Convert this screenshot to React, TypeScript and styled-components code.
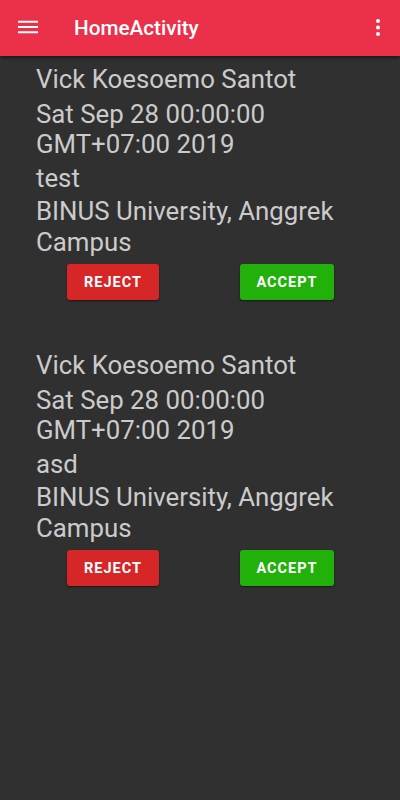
import styled, { createGlobalStyle } from 'styled-components'

const GlobalStyle = createGlobalStyle`
  html, body {
    margin: 0;
    padding: 0;
    background: #303030;
  }
  body {
    font-family: Roboto, "Noto Sans", sans-serif;
  }
`

const Screen = styled.div`
  width: 400px;
  min-height: 800px;
  background: #303030;
`

const Toolbar = styled.header`
  height: 56px;
  background: #ea3149;
  display: flex;
  align-items: center;
  padding: 0 10px 0 16px;
  box-shadow: 0 2px 3px rgba(0, 0, 0, 0.45);
  position: relative;
  z-index: 1;
`

const IconButton = styled.button`
  width: 24px;
  height: 24px;
  padding: 0;
  border: none;
  background: none;
  display: flex;
  align-items: center;
  justify-content: center;
  color: #fff;
`

const Title = styled.h1`
  flex: 1;
  margin: 0 0 0 34px;
  font-size: 20.7px;
  font-weight: 500;
  color: #fff;
`

const List = styled.main`
  padding-top: 8px;
`

const Card = styled.section`
  padding: 0 36px;
  margin-bottom: 50px;
`

const Line = styled.p<{ $gap?: number }>`
  margin: 0 0 ${p => p.$gap ?? 3}px;
  font-size: 25.8px;
  line-height: 30.5px;
  color: #cbcbcb;
`

const Actions = styled.div`
  display: grid;
  grid-template-columns: 1fr 1fr;
  margin: 7px -10px 0;
  justify-items: center;
`

const ActionButton = styled.button<{ $tone: 'reject' | 'accept' }>`
  height: 36px;
  min-width: 92px;
  padding: 0 16px;
  border: none;
  border-radius: 3px;
  background: ${p => (p.$tone === 'reject' ? '#d62628' : '#22b00b')};
  color: #fff;
  font-family: Roboto, sans-serif;
  font-weight: 700;
  font-size: 14.5px;
  letter-spacing: 1px;
  box-shadow: 0 1px 2px rgba(0, 0, 0, 0.5);
`

const MenuIcon = () => (
  <svg width="24" height="24" viewBox="0 0 24 24">
    <path d="M2 4.7h20v2H2zm0 5.3h20v2H2zm0 5.3h20v2H2z" fill="#fff" />
  </svg>
)

const MoreIcon = () => (
  <svg width="24" height="24" viewBox="0 0 24 24" fill="#fff">
    <circle cx="12" cy="5" r="2" />
    <circle cx="12" cy="11.5" r="2" />
    <circle cx="12" cy="18" r="2" />
  </svg>
)

const requests = [
  { name: 'Vick Koesoemo Santot', date: 'Sat Sep 28 00:00:00 GMT+07:00 2019', note: 'test', place: 'BINUS University, Anggrek Campus' },
  { name: 'Vick Koesoemo Santot', date: 'Sat Sep 28 00:00:00 GMT+07:00 2019', note: 'asd', place: 'BINUS University, Anggrek Campus' },
]

export default function App() {
  return (
    <Screen>
      <GlobalStyle />
      <Toolbar>
        <IconButton aria-label="menu">
          <MenuIcon />
        </IconButton>
        <Title>HomeActivity</Title>
        <IconButton aria-label="more">
          <MoreIcon />
        </IconButton>
      </Toolbar>
      <List>
        {requests.map((r, i) => (
          <Card key={i}>
            <Line $gap={4}>{r.name}</Line>
            <Line>{r.date}</Line>
            <Line>{r.note}</Line>
            <Line $gap={0}>{r.place}</Line>
            <Actions>
              <ActionButton $tone="reject">REJECT</ActionButton>
              <ActionButton $tone="accept">ACCEPT</ActionButton>
            </Actions>
          </Card>
        ))}
      </List>
    </Screen>
  )
}
